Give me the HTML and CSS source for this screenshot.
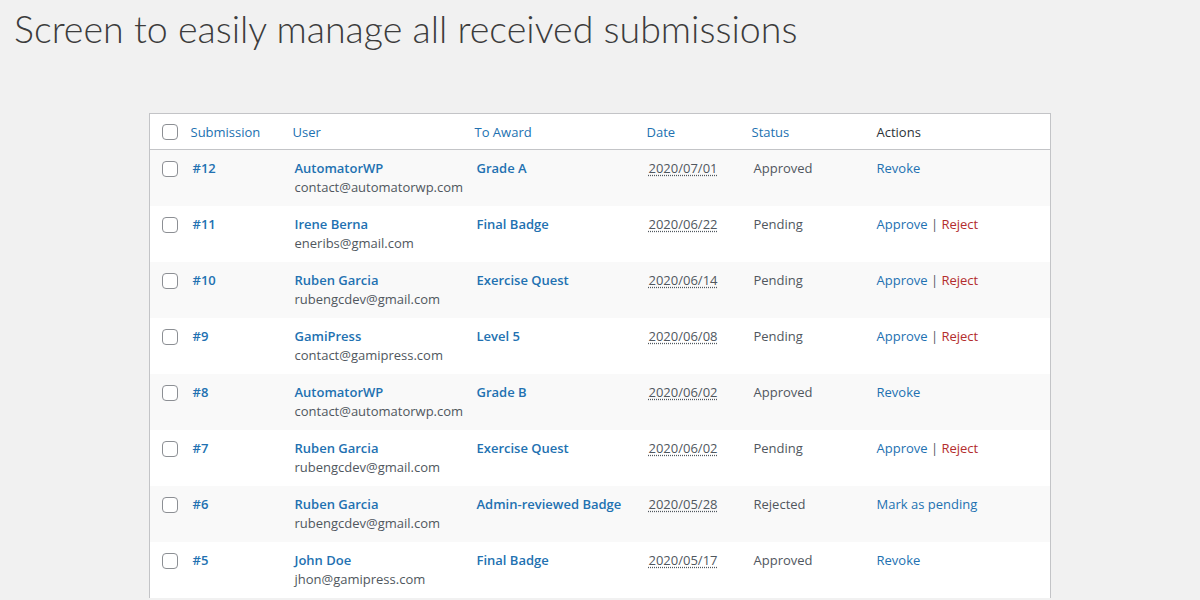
FILE: index.html
```html
<!DOCTYPE html>
<html lang="en">
<head>
<meta charset="UTF-8">
<meta name="viewport" content="width=device-width, initial-scale=1.0">
<link rel="stylesheet" href="styles.css">
<title>Submissions</title>
</head>
<body>
<h1 class="headline">Screen to easily manage all received submissions</h1>

<table class="submissions">
  <thead>
    <tr>
      <th class="check"><span class="box"></span></th>
      <th class="sortable col-id"><a href="#">Submission</a></th>
      <th class="sortable col-user"><a href="#">User</a></th>
      <th class="sortable col-award"><a href="#">To Award</a></th>
      <th class="sortable col-date"><a href="#">Date</a></th>
      <th class="sortable col-status"><a href="#">Status</a></th>
      <th class="col-actions">Actions</th>
    </tr>
  </thead>
  <tbody>
    <tr>
      <td class="check"><span class="box"></span></td>
      <td><a class="strong" href="#">#12</a></td>
      <td><a class="strong" href="#">AutomatorWP</a><br>contact@automatorwp.com</td>
      <td><a class="strong" href="#">Grade A</a></td>
      <td><abbr title="2020/07/01">2020/07/01</abbr></td>
      <td>Approved</td>
      <td><a href="#">Revoke</a></td>
    </tr>
    <tr>
      <td class="check"><span class="box"></span></td>
      <td><a class="strong" href="#">#11</a></td>
      <td><a class="strong" href="#">Irene Berna</a><br>eneribs@gmail.com</td>
      <td><a class="strong" href="#">Final Badge</a></td>
      <td><abbr title="2020/06/22">2020/06/22</abbr></td>
      <td>Pending</td>
      <td><a href="#">Approve</a> | <a class="reject" href="#">Reject</a></td>
    </tr>
    <tr>
      <td class="check"><span class="box"></span></td>
      <td><a class="strong" href="#">#10</a></td>
      <td><a class="strong" href="#">Ruben Garcia</a><br>rubengcdev@gmail.com</td>
      <td><a class="strong" href="#">Exercise Quest</a></td>
      <td><abbr title="2020/06/14">2020/06/14</abbr></td>
      <td>Pending</td>
      <td><a href="#">Approve</a> | <a class="reject" href="#">Reject</a></td>
    </tr>
    <tr>
      <td class="check"><span class="box"></span></td>
      <td><a class="strong" href="#">#9</a></td>
      <td><a class="strong" href="#">GamiPress</a><br>contact@gamipress.com</td>
      <td><a class="strong" href="#">Level 5</a></td>
      <td><abbr title="2020/06/08">2020/06/08</abbr></td>
      <td>Pending</td>
      <td><a href="#">Approve</a> | <a class="reject" href="#">Reject</a></td>
    </tr>
    <tr>
      <td class="check"><span class="box"></span></td>
      <td><a class="strong" href="#">#8</a></td>
      <td><a class="strong" href="#">AutomatorWP</a><br>contact@automatorwp.com</td>
      <td><a class="strong" href="#">Grade B</a></td>
      <td><abbr title="2020/06/02">2020/06/02</abbr></td>
      <td>Approved</td>
      <td><a href="#">Revoke</a></td>
    </tr>
    <tr>
      <td class="check"><span class="box"></span></td>
      <td><a class="strong" href="#">#7</a></td>
      <td><a class="strong" href="#">Ruben Garcia</a><br>rubengcdev@gmail.com</td>
      <td><a class="strong" href="#">Exercise Quest</a></td>
      <td><abbr title="2020/06/02">2020/06/02</abbr></td>
      <td>Pending</td>
      <td><a href="#">Approve</a> | <a class="reject" href="#">Reject</a></td>
    </tr>
    <tr>
      <td class="check"><span class="box"></span></td>
      <td><a class="strong" href="#">#6</a></td>
      <td><a class="strong" href="#">Ruben Garcia</a><br>rubengcdev@gmail.com</td>
      <td><a class="strong" href="#">Admin-reviewed Badge</a></td>
      <td><abbr title="2020/05/28">2020/05/28</abbr></td>
      <td>Rejected</td>
      <td><a href="#">Mark as pending</a></td>
    </tr>
    <tr>
      <td class="check"><span class="box"></span></td>
      <td><a class="strong" href="#">#5</a></td>
      <td><a class="strong" href="#">John Doe</a><br>jhon@gamipress.com</td>
      <td><a class="strong" href="#">Final Badge</a></td>
      <td><abbr title="2020/05/17">2020/05/17</abbr></td>
      <td>Approved</td>
      <td><a href="#">Revoke</a></td>
    </tr>
  </tbody>
</table>
</body>
</html>
```

FILE: styles.css
```css
body {
  margin: 0;
  padding: 0 14px;
  background: #f1f1f1;
  color: #50575e;
  font-family: "Open Sans", "Noto Sans", sans-serif;
  font-size: 13px;
  overflow: hidden;
}

.headline {
  margin: 0;
  padding-top: 3px;
  font-family: Lato, "Open Sans", sans-serif;
  font-weight: 300;
  font-size: 37.6px;
  line-height: 51px;
  color: #3c3c3c;
}

.submissions {
  width: 902px;
  margin: 59px auto 0;
  border: 1px solid #c3c4c7;
  border-bottom: 0;
  border-collapse: collapse;
  background: #fff;
  table-layout: fixed;
}

.submissions th,
.submissions td {
  box-sizing: border-box;
}

.submissions th {
  height: 36px;
  padding: 0 8px;
  text-align: left;
  font-weight: 400;
  color: #2c3338;
  border-bottom: 1px solid #c3c4c7;
  vertical-align: middle;
}

.submissions th.col-actions {
  padding: 0 10px;
}

.submissions td {
  height: 56px;
  padding: 9px 10px 8px;
  line-height: 19px;
  vertical-align: top;
}

.submissions tbody tr:nth-child(odd) {
  background: #f9f9f9;
}

.check { width: 33px; padding: 0 0 0 12px !important; }
.col-id { width: 102px; }
.col-user { width: 182px; }
.col-award { width: 172px; }
.col-date { width: 105px; }
.col-status { width: 123px; }

td.check { padding-top: 11px !important; }

.box {
  display: block;
  width: 14px;
  height: 14px;
  border: 1px solid #8c8f94;
  border-radius: 4px;
  background: #fff;
}

a {
  color: #2271b1;
  text-decoration: none;
}

a.strong {
  font-weight: 600;
}

a.reject {
  color: #b32d2e;
}

abbr {
  text-decoration: underline dotted;
  text-underline-offset: 2px;
}
```
